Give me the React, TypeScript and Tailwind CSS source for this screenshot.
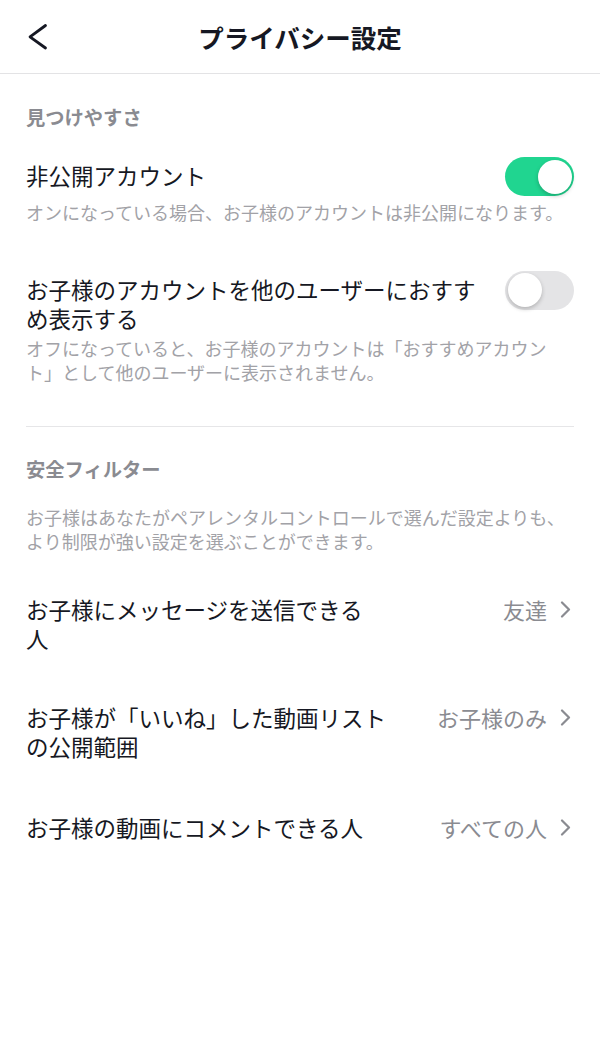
const font = "font-['Noto_Sans_CJK_JP','Noto_Sans',sans-serif]";

function Toggle({ on }: { on: boolean }) {
  return (
    <div
      className={`flex h-[39px] w-[69px] shrink-0 items-center rounded-full px-[2.5px] ${
        on ? "justify-end bg-[#20d590]" : "justify-start bg-[#e4e4e6]"
      }`}
    >
      <div className="h-[34px] w-[34px] rounded-full bg-white shadow-[0_2px_4px_rgba(0,0,0,0.22)]" />
    </div>
  );
}

function ToggleItem({
  title,
  desc,
  on,
  className = "",
}: {
  title: React.ReactNode;
  desc: React.ReactNode;
  on: boolean;
  className?: string;
}) {
  return (
    <div className={className}>
      <div className="flex items-start justify-between">
        <div className="text-[22.5px] leading-[29px] text-[#161823]">{title}</div>
        <div className="-mt-[4px]">
          <Toggle on={on} />
        </div>
      </div>
      <div className="mt-[3.5px] text-[18px] leading-[24px] text-[#a2a2a7]">{desc}</div>
    </div>
  );
}

function LinkRow({
  label,
  value,
  className = "",
}: {
  label: React.ReactNode;
  value: string;
  className?: string;
}) {
  return (
    <div className={`flex items-start justify-between ${className}`}>
      <div className="text-[22.5px] leading-[29px] text-[#161823]">{label}</div>
      <div className="flex items-center gap-[13px] pr-[3px]">
        <span className="text-[22px] leading-[29px] text-[#8a8b91]">{value}</span>
        <svg width="11" height="17" viewBox="0 0 11 17" fill="none">
          <polyline
            points="2,1.5 9,8.5 2,15.5"
            stroke="#8a8b91"
            strokeWidth="2.2"
            strokeLinecap="round"
            strokeLinejoin="round"
          />
        </svg>
      </div>
    </div>
  );
}

export default function App() {
  return (
    <div className={`h-[1038px] w-[600px] bg-white ${font}`}>
      <header className="flex h-[74px] items-center border-b border-[#e3e3e5]">
        <div className="flex w-[80px] pl-[27px]">
          <svg width="22" height="28" viewBox="0 0 22 28" fill="none">
            <polyline
              points="18.5,2.5 3,13.8 18.5,25"
              stroke="#161823"
              strokeWidth="2.8"
              strokeLinecap="round"
              strokeLinejoin="round"
            />
          </svg>
        </div>
        <h1 className="flex-1 text-center text-[25.5px] font-bold leading-[30px] text-[#161823]">
          プライバシー設定
        </h1>
        <div className="w-[80px]" />
      </header>

      <main className="px-[26px]">
        <h2 className="pt-[30px] text-[19.3px] font-bold leading-[26px] text-[#8a8b91]">
          見つけやすさ
        </h2>

        <ToggleItem
          className="mt-[31px]"
          on
          title="非公開アカウント"
          desc="オンになっている場合、お子様のアカウントは非公開になります。"
        />

        <ToggleItem
          className="mt-[51px]"
          on={false}
          title={
            <>
              お子様のアカウントを他のユーザーにおすす
              <br />
              め表示する
            </>
          }
          desc={
            <>
              オフになっていると、お子様のアカウントは「おすすめアカウン
              <br />
              ト」として他のユーザーに表示されません。
            </>
          }
        />

        <div className="mt-[42px] h-px bg-[#e6e6e8]" />

        <h2 className="mt-[29px] text-[19.3px] font-bold leading-[26px] text-[#8a8b91]">
          安全フィルター
        </h2>
        <p className="mt-[23px] text-[18px] leading-[24px] text-[#a2a2a7]">
          お子様はあなたがペアレンタルコントロールで選んだ設定よりも、
          <br />
          より制限が強い設定を選ぶことができます。
        </p>

        <LinkRow
          className="mt-[42px]"
          label={
            <>
              お子様にメッセージを送信できる
              <br />
              人
            </>
          }
          value="友達"
        />
        <LinkRow
          className="mt-[50px]"
          label={
            <>
              お子様が「いいね」した動画リスト
              <br />
              の公開範囲
            </>
          }
          value="お子様のみ"
        />
        <LinkRow className="mt-[52px]" label="お子様の動画にコメントできる人" value="すべての人" />
      </main>
    </div>
  );
}
